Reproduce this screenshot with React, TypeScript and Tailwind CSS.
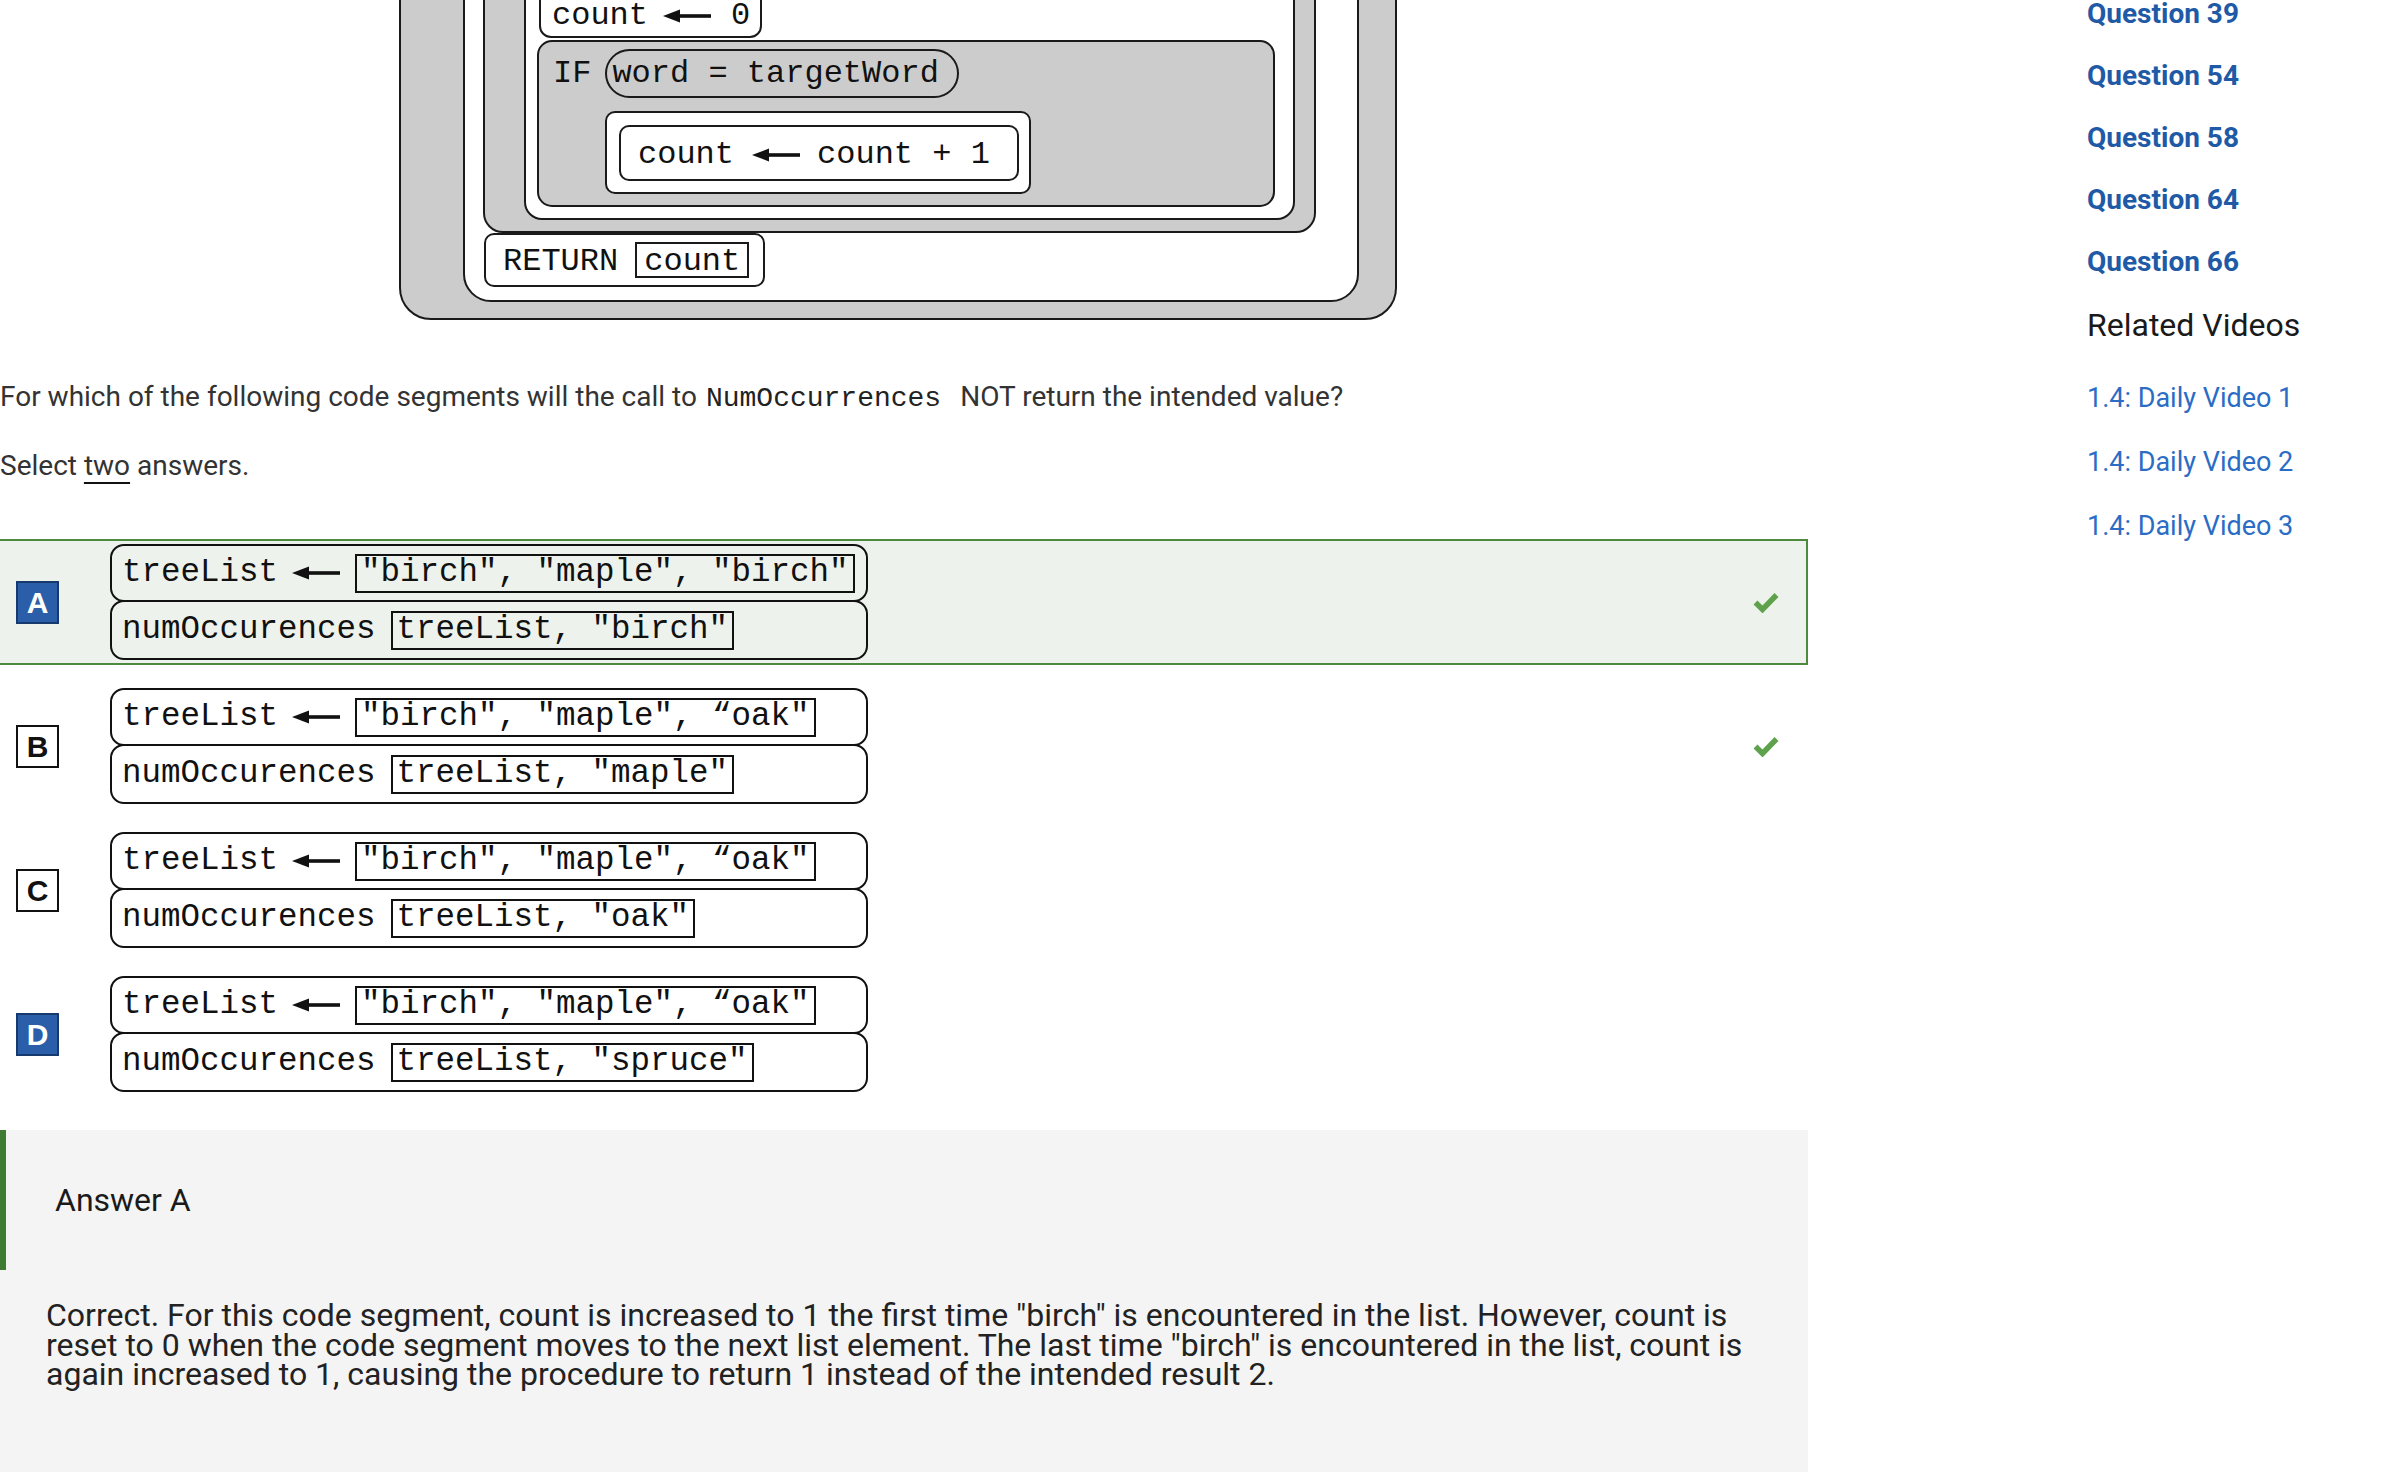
import React from 'react';

type Choice = {
  letter: string;
  list: string;
  arg: string;
  selected: boolean;
  picked: boolean;
  correct: boolean;
};

const choices: Choice[] = [
  { letter: 'A', list: '"birch", "maple", "birch"', arg: 'treeList, "birch"', selected: true, picked: true, correct: true },
  { letter: 'B', list: '"birch", "maple", “oak"', arg: 'treeList, "maple"', selected: false, picked: false, correct: true },
  { letter: 'C', list: '"birch", "maple", “oak"', arg: 'treeList, "oak"', selected: false, picked: false, correct: false },
  { letter: 'D', list: '"birch", "maple", “oak"', arg: 'treeList, "spruce"', selected: false, picked: true, correct: false },
];

const Arrow = () => (
  <svg width="48" height="14" viewBox="0 0 48 14" className="shrink-0">
    <polygon points="0,7 17,0.5 17,13.5" fill="#111" />
    <rect x="15" y="5.2" width="33" height="3.6" fill="#111" />
  </svg>
);

const Check = () => (
  <svg width="26" height="21" viewBox="0 0 26 21" className="ml-auto mr-[27px] shrink-0">
    <path d="M2.5 10.5 L9.5 17.5 L23.5 3" fill="none" stroke="#5fa24c" strokeWidth="5.5" />
  </svg>
);

const Diagram = () => (
  <div className="h-[320px] shrink-0 overflow-hidden flex flex-col justify-end font-['Liberation_Mono',monospace] text-[32px] text-[#111]">
    <div className="shrink-0 ml-[399px] w-[998px] bg-[#cccccc] border-2 border-[#1a1a1a] rounded-[32px] pt-[20px] pl-[62px] pr-[36px] pb-[16px]">
      <div className="bg-white border-2 border-[#1a1a1a] rounded-[28px] pt-[20px] pl-[18px] pr-[41px] pb-[13px]">
        {/* loop body */}
        <div className="bg-[#cccccc] border-2 border-[#1a1a1a] rounded-[20px] pt-[20px] pl-[39px] pr-[19px] pb-[11px]">
          <div className="bg-white border-2 border-[#1a1a1a] rounded-[18px] pt-[20px] pl-[11px] pr-[18px] pb-[11px]">
            <div className="ml-[2px] w-[223px] h-[50px] bg-white border-2 border-[#1a1a1a] rounded-[12px] flex items-center pl-[11px] pt-[6px]">
              <span>count</span>
              <span className="ml-[15px]"><Arrow /></span>
              <span className="ml-[20px]">0</span>
            </div>
            <div className="mt-[2px] h-[167px] bg-[#cccccc] border-2 border-[#1a1a1a] rounded-[15px] pt-[6px] pl-[14px]">
              <div className="flex items-center gap-[14px]">
                <span className="pt-[2px]">IF</span>
                <div className="w-[354px] h-[49px] border-2 border-[#1a1a1a] rounded-full flex items-center pl-[5px] pt-[2px]">
                  word = targetWord
                </div>
              </div>
              <div className="mt-[13px] ml-[52px] w-[426px] h-[83px] bg-white border-2 border-[#1a1a1a] rounded-[10px] pt-[12px] pl-[12px]">
                <div className="w-[400px] h-[56px] border-2 border-[#1a1a1a] rounded-[10px] flex items-center pl-[17px] pt-[4px]">
                  <span>count</span>
                  <span className="ml-[18px]"><Arrow /></span>
                  <span className="ml-[17px]">count + 1</span>
                </div>
              </div>
            </div>
          </div>
        </div>
        <div className="ml-[1px] w-[281px] h-[54px] bg-white border-2 border-[#1a1a1a] rounded-[10px] flex items-center pl-[17px]">
          <span className="pt-[4px]">RETURN</span>
          <span className="ml-[17px] h-[36px] border-2 border-[#1a1a1a] px-[7px] pt-[3px] flex items-center">count</span>
        </div>
      </div>
    </div>
  </div>
);

const ChoiceRow = ({ c }: { c: Choice }) => (
  <div
    className={
      c.selected
        ? 'flex items-center h-[126px] w-[1808px] bg-[#edf3ec] border-y-2 border-r-2 border-[#4e8a3e]'
        : 'flex items-center h-[126px] w-[1808px] border-y-2 border-r-2 border-transparent'
    }
  >
    <div
      className={
        c.picked
          ? "ml-[16px] w-[43px] h-[43px] shrink-0 flex items-center justify-center bg-[#2b5ea8] border-2 border-[#173a6e] text-white font-['Liberation_Sans',sans-serif] font-bold text-[30px]"
          : "ml-[16px] w-[43px] h-[43px] shrink-0 flex items-center justify-center bg-white border-2 border-[#111] text-[#111] font-['Liberation_Sans',sans-serif] font-bold text-[30px]"
      }
    >
      {c.letter}
    </div>
    <div className="ml-[51px] w-[758px] shrink-0 font-['Liberation_Mono',monospace] text-[32.5px] text-[#111]">
      <div className="h-[58px] border-2 border-[#111] rounded-[14px] flex items-center pl-[10px]">
        <span>treeList</span>
        <span className="ml-[14px]"><Arrow /></span>
        <span className="ml-[15px] h-[39px] border-2 border-[#111] px-[4px] flex items-center whitespace-pre">{c.list}</span>
      </div>
      <div className="-mt-[2px] h-[60px] border-2 border-[#111] rounded-[14px] flex items-center pl-[10px]">
        <span>numOccurences</span>
        <span className="ml-[15px] h-[39px] border-2 border-[#111] px-[4px] flex items-center whitespace-pre">{c.arg}</span>
      </div>
    </div>
    {c.correct && <Check />}
  </div>
);

const questionLinks = ['Question 39', 'Question 54', 'Question 58', 'Question 64', 'Question 66'];
const videoLinks = ['1.4: Daily Video 1', '1.4: Daily Video 2', '1.4: Daily Video 3'];

const App: React.FC = () => {
  return (
    <div className="flex w-[2392px] h-[1472px] overflow-hidden bg-white font-['Roboto',sans-serif]">
      <main className="w-[1808px] shrink-0">
        <Diagram />

        <p className="mt-[57px] text-[28px] leading-[40px] text-[#333] whitespace-nowrap">
          For which of the following code segments will the call to
          <code className="font-['Liberation_Mono',monospace] text-[28px] pl-[9px] pr-[19px] text-[#222]">NumOccurrences</code>
          NOT return the intended value?
        </p>
        <p className="mt-[27px] text-[28px] leading-[40px] text-[#333]">
          Select <span className="underline decoration-2 decoration-[#111] underline-offset-[7px]">two</span> answers.
        </p>

        <div className="mt-[53px] flex flex-col gap-[18px]">
          {choices.map(c => (
            <ChoiceRow key={c.letter} c={c} />
          ))}
        </div>

        <div className="mt-[33px] w-[1808px] bg-[#f4f4f4] pb-[120px]">
          <div className="h-[140px] flex items-center border-l-[6px] border-[#3e7c32] pl-[49px]">
            <span className="text-[32px] text-[#1a1a1a]">Answer A</span>
          </div>
          <p className="mt-[31px] pl-[46px] pr-[50px] text-[32px] leading-[29.5px] text-[#222]">
            Correct. For this code segment, count is increased to 1 the first time "birch" is encountered in the list. However, count is reset to 0 when the code segment moves to the next list element. The last time "birch" is encountered in the list, count is again increased to 1, causing the procedure to return 1 instead of the intended result 2.
          </p>
        </div>
      </main>

      <aside className="ml-[279px] -mt-[17px] flex flex-col">
        {questionLinks.map(q => (
          <a key={q} className="text-[28px] leading-[62px] font-bold text-[#1f5aa6]">{q}</a>
        ))}
        <h3 className="mt-[12px] text-[32px] leading-[40px] text-[#1a1a1a]">Related Videos</h3>
        <div className="mt-[21px] flex flex-col">
          {videoLinks.map(v => (
            <a key={v} className="text-[27px] leading-[64px] text-[#2b6cc4]">{v}</a>
          ))}
        </div>
      </aside>
    </div>
  );
};

export default App;
